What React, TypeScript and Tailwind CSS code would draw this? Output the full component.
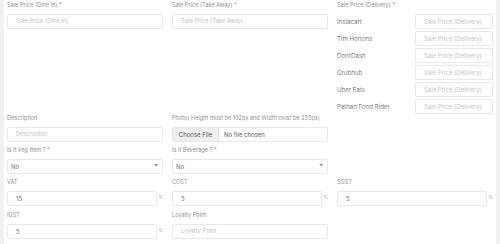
import React from "react";

const font = { fontFamily: "Inter, 'Open Sans', sans-serif" };

function Label({ children, cls = "text-[5.6px]" }: { children: React.ReactNode; cls?: string }) {
  return (
    <div className={`h-[9px] leading-[9px] text-[#919191] mb-[4px] whitespace-nowrap ${cls}`}>
      {children}
    </div>
  );
}

function Input({ placeholder, value, ph = "text-[5.8px]" }: { placeholder?: string; value?: string; ph?: string }) {
  return (
    <div className="h-[15px] border border-[#e8e8e8] rounded-[2px] bg-white flex items-center px-[8px]">
      {value ? (
        <span className="text-[#707070] text-[6px]">{value}</span>
      ) : (
        <span className={`text-[#c4c4c4] ${ph}`}>{placeholder}</span>
      )}
    </div>
  );
}

function Pct({ value }: { value: string }) {
  return (
    <div className="flex items-center">
      <div className="flex-1">
        <Input value={value} />
      </div>
      <span className="w-[6px] text-[4.5px] text-[#a0a0a0] text-right">%</span>
    </div>
  );
}

function Select() {
  return (
    <div className="h-[15px] border border-[#e8e8e8] rounded-[2px] bg-white flex items-center justify-between pl-[3px] pr-[4px] text-[6px] text-[#707070]">
      <span>No</span>
      <span className="text-[3.5px] text-[#888]">▼</span>
    </div>
  );
}

const providers = ["Instacart", "Tim Hortons", "DoorDash", "Grubhub", "Uber Eats", "Pathao Food Rider"];

export default function App() {
  return (
    <div className="w-[500px] h-[244px] flex bg-white overflow-hidden" style={font}>
      <div className="w-[4px] bg-[#f1f1f1]" />
      <div className="flex-1 pl-[3px] pr-[3px]">
        <div className="grid grid-cols-3 gap-x-[9px] pt-[1px]">
          <div>
            <Label>Sale Price (Dine In) *</Label>
            <Input placeholder="Sale Price (Dine In)" />
          </div>
          <div>
            <Label>Sale Price (Take Away) *</Label>
            <Input placeholder="Sale Price (Take Away)" />
          </div>
          <div>
            <Label>Sale Price (Delivery) *</Label>
            <div className="flex flex-col gap-[2px]">
              {providers.map((p) => (
                <div key={p} className="flex items-center">
                  <span className="w-[78px] text-[6.2px] font-light text-[#555] whitespace-nowrap">{p}</span>
                  <div className="flex-1">
                    <Input placeholder="Sale Price (Delivery)" ph="text-[6px]" />
                  </div>
                </div>
              ))}
            </div>
          </div>
        </div>

        <div className="grid grid-cols-3 gap-x-[9px] gap-y-[4px]">
          <div>
            <Label>Description</Label>
            <Input placeholder="Description" />
          </div>
          <div>
            <Label cls="text-[5.6px]">Photo( Height must be 102px and Width must be 235px)</Label>
            <div className="h-[15px] border border-[#e8e8e8] rounded-[2px] bg-white flex items-center text-[6px] overflow-hidden">
              <span className="h-full bg-[#efefef] text-[#5a5a5a] w-[46px] flex items-center justify-center border-r border-[#e0e0e0]">
                Choose File
              </span>
              <span className="pl-[5px] text-[#5a5a5a]">No file chosen</span>
            </div>
          </div>
          <div />
          <div>
            <Label>Is it Veg Item ? *</Label>
            <Select />
          </div>
          <div>
            <Label>Is it Beverage ? *</Label>
            <Select />
          </div>
          <div />
          <div>
            <Label>VAT</Label>
            <Pct value="15" />
          </div>
          <div>
            <Label>COST</Label>
            <Pct value="5" />
          </div>
          <div>
            <Label>SGST</Label>
            <Pct value="5" />
          </div>
          <div className="mt-[1px]">
            <Label>IGST</Label>
            <Pct value="5" />
          </div>
          <div className="mt-[1px]">
            <Label>Loyalty Point</Label>
            <Input placeholder="Loyalty Point" />
          </div>
        </div>
      </div>
      <div className="w-[4px] bg-[#f1f1f1]" />
    </div>
  );
}
